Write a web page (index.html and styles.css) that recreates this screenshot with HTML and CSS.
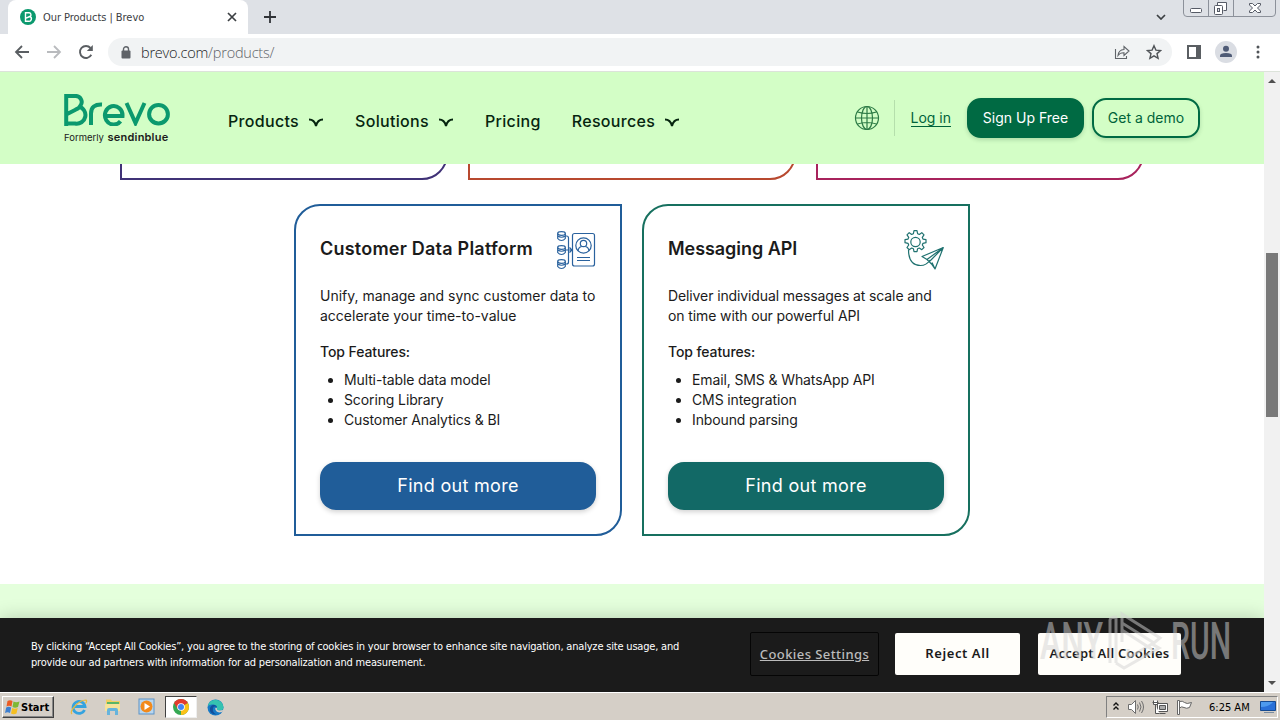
FILE: index.html
```html
<!DOCTYPE html>
<html lang="en">
  <head>
    <meta charset="UTF-8" />
    <meta name="viewport" content="width=device-width, initial-scale=1.0" />
    <title>Our Products | Brevo</title>
    <link rel="stylesheet" href="styles.css">
  </head>
  <body>
    <!-- Browser tabs -->
    <div class="tab-strip">
      <div class="tab">
        <svg class="favicon" width="16" height="16" viewBox="0 0 16 16">
          <circle cx="8" cy="8" r="8" fill="#0b996e" />
          <path d="M5.500 12.300V3.700H8.700a2 2 0 0 1 1.100 3.800a2.500 2.500 0 0 1-1.300 4.800zM5.500 9.300L9.800 7.500" fill="none" stroke="#fff" stroke-width="1.400" />
        </svg>
        <span class="tab-title">Our Products | Brevo</span>
        <svg width="10" height="10" viewBox="0 0 10 10"><path d="M1 1l8 8M9 1l-8 8" stroke="#3c4043" stroke-width="1.700" /></svg>
      </div>
      <svg class="new-tab" width="12" height="12" viewBox="0 0 12 12"><path d="M6 0v12M0 6h12" stroke="#303338" stroke-width="1.800" /></svg>
      <svg class="tab-search" width="10" height="6" viewBox="0 0 10 6"><path d="M1 1l4 4 4-4" fill="none" stroke="#3c4043" stroke-width="1.700" /></svg>
      <svg class="window-buttons" width="94" height="17" viewBox="0 0 94 17">
        <path d="M.5 0v13q0 3.500 3.500 3.500h85q3.500 0 3.500-3.500V0M25.500 0v16M50.500 0v16" fill="none" stroke="#8c919a" />
        <rect x="7.500" y="8.500" width="11" height="4" rx="1" fill="#fff" stroke="#565b66" />
        <path d="M34.500 5.500v-3h9v8h-3" fill="#fff" stroke="#565b66" />
        <rect x="31.500" y="5.500" width="8" height="9" rx="1" fill="#fff" stroke="#565b66" />
        <rect x="34.500" y="8.500" width="2" height="3" fill="#dee1e6" stroke="#565b66" />
        <path d="M66.500 3.500h3l2.500 2.500 2.500-2.500h3v1.500L74.500 8l3 3v1.500h-3L72 10l-2.500 2.500h-3V11l3-3-3-3z" fill="#fff" stroke="#565b66" />
      </svg>
    </div>

    <!-- Address bar -->
    <div class="toolbar">
      <svg width="16" height="16" viewBox="0 0 16 16"><path d="M15 8H2M8 2L2 8l6 6" fill="none" stroke="#5a5e62" stroke-width="1.800" /></svg>
      <svg width="16" height="16" viewBox="0 0 16 16"><path d="M1 8h13M8 2l6 6-6 6" fill="none" stroke="#b9bbbe" stroke-width="1.800" /></svg>
      <svg width="16" height="16" viewBox="0 0 16 16"><path d="M13.300 10.800A6 6 0 1 1 12.500 4" fill="none" stroke="#5a5e62" stroke-width="1.900" /><path d="M14.800 1v6h-6z" fill="#5a5e62" /></svg>
      <div class="address">
        <svg class="lock" width="10" height="13" viewBox="0 0 10 13"><rect x="0.500" y="4.500" width="9" height="8" rx="1" fill="#5f6368" /><path d="M2.500 5V3a2.500 2.200 0 0 1 5 0v2" fill="none" stroke="#5f6368" stroke-width="1.400" /></svg>
        <span class="url">brevo.com<span>/products/</span></span>
        <svg class="share" width="16" height="15" viewBox="0 0 16 15"><path d="M1.500 4v9.500h11V11M4 10.500q.5-5.500 6-6V1.500L15 6l-5 4.500V7.800Q6 7.600 4 10.500z" fill="none" stroke="#606469" stroke-width="1.100" /></svg>
        <svg width="16" height="16" viewBox="0 0 16 16"><path d="M8 1.700l1.900 4.400 4.700.4-3.600 3.100 1.100 4.700L8 11.800l-4.100 2.500L5 9.600 1.400 6.500l4.700-.4z" fill="none" stroke="#505458" stroke-width="1.400" /></svg>
      </div>
      <svg class="side-panel" width="14" height="14" viewBox="0 0 14 14"><rect x="1" y="1" width="12" height="12" fill="#fff" stroke="#5a5e62" stroke-width="2" /><path d="M9 1h5v12H9z" fill="#5a5e62" /></svg>
      <svg class="profile" width="22" height="22" viewBox="0 0 22 22"><circle cx="11" cy="11" r="11" fill="#dadde3" /><circle cx="11" cy="7.800" r="3" fill="#4f5b76" /><path d="M5 16v-1.500q0-2.500 6-2.500t6 2.500V16z" fill="#4f5b76" /></svg>
      <svg width="4" height="14" viewBox="0 0 4 14" fill="#505458"><circle cx="2" cy="2" r="1.500" /><circle cx="2" cy="7" r="1.500" /><circle cx="2" cy="12" r="1.500" /></svg>
    </div>

    <div class="viewport">
      <div class="page">
        <header>
          <a class="logo">
            <!-- Rounded stroke wordmark -->
            <svg width="106" height="32" viewBox="0 0 106 32" role="img" aria-label="Brevo">
              <g fill="none" stroke="#0b996e" stroke-width="4">
                <path d="M2.200 32V2H11a6 6 0 0 1 5.500 9.500q-1 2.500-5 4.200L2.200 20.500M14.500 12.500a8.500 8.500 0 0 1-3.500 17H2.200" />
                <path d="M27 31V19.500q0-9.500 11-9" />
                <path d="M41.500 22H58.500A8.800 9.300 0 1 0 56.500 27.200" />
                <path d="M62.500 9L71.500 29L80.500 9" />
                <ellipse cx="94.500" cy="20.200" rx="9.400" ry="9.300" />
              </g>
            </svg>
            <span class="formerly">Formerly <b>sendinblue</b></span>
          </a>
          <nav>
            <a>Products <svg width="16" height="10" viewBox="0 0 16 10"><path d="M1 1.500q5.500 0 7 6.500q1.500-6.500 7-6.500" /></svg></a>
            <a>Solutions <svg width="16" height="10" viewBox="0 0 16 10"><path d="M1 1.500q5.500 0 7 6.500q1.500-6.500 7-6.500" /></svg></a>
            <a>Pricing</a>
            <a>Resources <svg width="16" height="10" viewBox="0 0 16 10"><path d="M1 1.500q5.500 0 7 6.500q1.500-6.500 7-6.500" /></svg></a>
          </nav>
          <div class="account">
            <svg width="26" height="26" viewBox="0 0 26 26" fill="none" stroke="#2c7a45" stroke-width="1.200"><circle cx="13" cy="13" r="11.500" /><ellipse cx="13" cy="13" rx="5.500" ry="11.500" /><path d="M13 1.500v23M1.500 13h23M3.500 7q9.500 3 19 0M3.500 19q9.500-3 19 0" /></svg>
            <span class="divider"></span>
            <a class="login">Log in</a>
            <a class="btn btn-signup">Sign Up Free</a>
            <a class="btn btn-demo">Get a demo</a>
          </div>
        </header>

        <main>
          <div class="card-row card-row-top">
            <div class="card-end purple"></div>
            <div class="card-end orange"></div>
            <div class="card-end pink"></div>
          </div>
          <div class="card-row">
            <section class="card blue">
              <div class="card-head">
                <h2 class="title-cdp">Customer Data Platform</h2>
                <svg width="40" height="40" viewBox="0 0 40 40" fill="none" stroke="#2a629e" stroke-width="1.200">
                  <rect x="16.500" y="3.500" width="22" height="32.500" rx="2" />
                  <circle cx="27.500" cy="15.500" r="7.700" />
                  <circle cx="27.500" cy="13.500" r="3.200" />
                  <path d="M22 21q.5-4 3.700-4.500M33 21q-.5-4-3.700-4.500M21 27.500h13M21 30.500h13" />
                  <path d="M9 6h1.500q2 0 2 2v24q0 2-2 2H9M9 20h7M13.500 17.500L16 20l-2.500 2.500" />
                  <ellipse cx="5.500" cy="3.500" rx="3.800" ry="1.800" /><path d="M1.700 3.500v5q1.500 2 3.800 2t3.800-2v-5M1.700 6q3.800 2.500 7.600 0" />
                  <ellipse cx="5.500" cy="17.500" rx="3.800" ry="1.800" /><path d="M1.700 17.500v5q1.500 2 3.800 2t3.800-2v-5M1.700 20q3.800 2.500 7.600 0" />
                  <ellipse cx="5.500" cy="31.500" rx="3.800" ry="1.800" /><path d="M1.700 31.500v5q1.500 2 3.800 2t3.800-2v-5M1.700 34q3.800 2.500 7.600 0" />
                </svg>
              </div>
              <p>Unify, manage and sync customer data to<br />accelerate your time-to-value</p>
              <h3>Top Features:</h3>
              <ul>
                <li>Multi-table data model</li>
                <li>Scoring Library</li>
                <li>Customer Analytics &amp; BI</li>
              </ul>
              <a class="find-out">Find out more</a>
            </section>
            <section class="card teal">
              <div class="card-head">
                <h2 class="title-api">Messaging API</h2>
                <svg width="40" height="40" viewBox="0 0 40 40" fill="none" stroke="#207270" stroke-width="1.200" stroke-linejoin="round">
                  <circle cx="11.500" cy="12" r="4.700" />
                  <path d="M10 .700h3l.6 3 1.700.7 2.500-1.700 2.200 2.200-1.700 2.500.7 1.700 3 .6v3l-3 .6-.7 1.700 1.700 2.500-2.200 2.200-2.500-1.700-1.700.7-.6 3h-3l-.6-3-1.700-.7-2.500 1.700L3 17.500 4.700 15 4 13.300l-3-.6v-3l3-.6.7-1.700L3 4.900l2.200-2.200 2.500 1.700 1.700-.7z" />
                  <path d="M4.500 19.500q0 16 12 16q6 0 9.500-5.500M39.300 17.500L18 26.500l5 3zL31 39l-3-6.500M23 29.500l4.500 4.500L31 39M25.500 31.500L39.300 17.500" />
                </svg>
              </div>
              <p class="api-text">Deliver individual messages at scale and<br />on time with our powerful API</p>
              <h3>Top features:</h3>
              <ul>
                <li>Email, SMS &amp; WhatsApp API</li>
                <li>CMS integration</li>
                <li>Inbound parsing</li>
              </ul>
              <a class="find-out">Find out more</a>
            </section>
          </div>
        </main>

        <div class="next-section"></div>

        <div class="cookie-banner">
          <p>By clicking “Accept All Cookies”, you agree to the storing of cookies in your browser to enhance site navigation, analyze site usage, and<br />provide our ad partners with information for ad personalization and measurement.</p>
          <a class="cookie-settings">Cookies Settings</a>
          <a class="cookie-btn reject">Reject All</a>
          <a class="cookie-btn accept">Accept All Cookies</a>
        </div>
      </div>

      <div class="scrollbar">
        <svg width="8" height="4" viewBox="0 0 8 4"><path d="M0 4l4-4 4 4z" fill="#505050" /></svg>
        <div class="thumb"></div>
        <svg class="down" width="8" height="4" viewBox="0 0 8 4"><path d="M0 0l4 4 4-4z" fill="#505050" /></svg>
      </div>
    </div>

    <!-- Windows taskbar -->
    <footer class="taskbar">
      <div class="start">
        <svg width="17" height="16" viewBox="0 0 16 16">
          <path d="M3 2q2.500-1.500 5 0L7 7.500q-2.500-1.500-5 0z" fill="#ec5b22" />
          <path d="M9 2.500q2.500 1.500 6 0L13.500 8q-3 1.500-5.500 0z" fill="#7eb834" />
          <path d="M1.700 8.500q2.500-1.500 5 0L5.500 14q-2.500-1.500-5 0z" fill="#3d7fd0" />
          <path d="M7.700 9q2.500 1.500 5.500 0L12 14.500q-3 1.500-5.500 0z" fill="#f5bf21" />
        </svg>
        <b>Start</b>
      </div>
      <div class="task">
        <svg width="18" height="18" viewBox="0 0 18 18"><path d="M14.500 12A6 6 0 1 1 15 8.500H4" fill="none" stroke="#35a3df" stroke-width="2.800" /><path d="M2 16Q-.5 14 5 8T16 2q1.500 1-.5 3.500" fill="none" stroke="#e9b93a" stroke-width="1.200" /></svg>
      </div>
      <div class="task">
        <svg width="18" height="18" viewBox="0 0 18 18"><path d="M2 4V1.500h5L8 3h8v7H2z" fill="#f1cf62" /><path d="M3 4h12v2H3z" fill="#5bb567" /><path d="M1 6h15v7H1z" fill="#f7e39a" /><path d="M3 17v-5q0-2 2-2h7q2 0 2 2v5h-3v-4H6v4z" fill="#67b4dc" /></svg>
      </div>
      <div class="task">
        <svg width="18" height="18" viewBox="0 0 18 18"><rect x="1" y="1" width="15" height="15" fill="#b8d6ef" stroke="#5d94c8" /><circle cx="8.500" cy="8.500" r="6" fill="#f28a1c" /><path d="M6.500 5v7l5.500-3.500z" fill="#fff" /></svg>
      </div>
      <div class="task active">
        <svg width="16" height="16" viewBox="0 0 16 16"><circle cx="8" cy="8" r="8" fill="#35a853" /><path d="M8 8L1.100 4A8 8 0 0 1 14.900 4z" fill="#e33b2e" /><path d="M8 8L14.900 4A8 8 0 0 1 8 16z" fill="#fbc116" /><path d="M1.100 4L5 10.500 8 8 8 4z" fill="#e33b2e" /><circle cx="8" cy="8" r="3.800" fill="#fff" /><circle cx="8" cy="8" r="3" fill="#4285f4" /></svg>
      </div>
      <div class="task">
        <svg width="17" height="17" viewBox="0 0 17 17"><circle cx="8.500" cy="8.500" r="8" fill="#1779c6" /><path d="M.700 7A8 8 0 0 1 16.500 8q0 3.500-4 3.500-3 0-2.500-2Q10 6 6 5.500 3 5 .700 7z" fill="#35c2b0" /><path d="M6.500 8q-2.500 5 3 7.500Q2 15 3 9q1-3 4-3.200 3 .5 3 3-2-2-3.500-.8z" fill="#124f9c" /><path d="M10 9q-1.500 3.500 6.500 2 .5 1-1.500 2-5 1.500-6.500-2Q7.500 8 10 9z" fill="#d5cfc7" /></svg>
      </div>
      <div class="tray">
        <svg width="8" height="10" viewBox="0 0 8 10"><path d="M1.500 3.500L4 1l2.500 2.500M1.500 7.500L4 5l2.500 2.500" fill="none" stroke="#111" stroke-width="1.400" /></svg>
        <svg width="16" height="14" viewBox="0 0 16 14" fill="#fff" stroke="#6d6d6d"><path d="M.500 4.500h3l4-4v13l-4-4h-3z" /><path d="M9.500 4.500q1.500 2.500 0 5M11.500 2.500q3 4.500 0 9M13.500 1q4 6 0 12" fill="none" /></svg>
        <svg width="17" height="15" viewBox="0 0 17 15" fill="#fff" stroke="#555"><path d="M5.500 3.500h10v8h-10zM7.500 13.500h6" /><path d="M7.500 5.500h6v4h-6z" fill="#aaa" /><path d="M1.500.500v4h4v-4M.500 2.500h6M3.500 5v8.500h4" /></svg>
        <svg width="16" height="15" viewBox="0 0 16 15" fill="#fff" stroke="#666"><path d="M.500.500h2v14h-2zM2.500 1.500q3-1 5 1t7 0l-2 5q-3 1.500-5.500 0T2.500 8z" /></svg>
        <span class="clock">6:25 AM</span>
        <svg class="desktop" width="16" height="14" viewBox="0 0 16 14"><path d="M.500 1.500h15v9H.500z" fill="#2970d8" stroke="#154a91" /><path d="M1 7q8 0 12-5H1z" fill="#4d9aee" /><path d="M4 12.500h10" stroke="#7a8ca0" /></svg>
      </div>
    </footer>

    <svg class="watermark" width="200" height="66" viewBox="0 0 200 66" aria-hidden="true">
      <text x="4" y="50" textLength="63" lengthAdjust="spacingAndGlyphs">ANY</text>
      <text x="135" y="50" textLength="60" lengthAdjust="spacingAndGlyphs">RUN</text>
      <path d="M74 54V11q0-3 7-3M80 54V8M86 33V5l38 24-6 5-32-20M86 21l31 20M80 54l8 5 35-20-7-4-24 14v-9" />
    </svg>
  </body>
</html>
```
FILE: styles.css
```css
/* General Styling */
* {
  box-sizing: border-box;
}

body {
  margin: 0;
  width: 1280px;
  height: 720px;
  overflow: hidden;
  display: flex;
  flex-direction: column;
  position: relative;
  font-family: Inter, "Liberation Sans", sans-serif;
  font-size: 14px;
  color: #1b1b1b;
  background: #fff;
}

svg {
  display: block;
  flex: none;
}

h2,
h3,
p,
ul {
  margin: 0;
}

a,
span {
  white-space: nowrap;
}

/* Browser */
.tab-strip {
  height: 34px;
  flex: none;
  display: flex;
  align-items: center;
  background: #dee1e6;
}

.tab {
  width: 240px;
  height: 34px;
  margin-left: 8px;
  padding: 0 11px 0 12px;
  display: flex;
  align-items: center;
  background: #fff;
  border-radius: 8px 8px 0 0;
}

.tab-title {
  flex: 1;
  margin-left: 7px;
  font: 11px "DejaVu Sans Condensed", "DejaVu Sans", sans-serif;
  font-stretch: condensed;
  letter-spacing: -0.05px;
  color: #3c4043;
}

.new-tab {
  margin-left: 16px;
}

.tab-search {
  margin-left: auto;
}

.window-buttons {
  align-self: flex-start;
  margin: 0 3px 0 17px;
}

.toolbar {
  height: 38px;
  flex: none;
  display: flex;
  align-items: center;
  gap: 16px;
  padding: 0 20px 1px 14px;
  border-bottom: 1px solid #dce3da;
}

.address {
  flex: 1;
  height: 28px;
  margin-left: -2px;
  padding: 0 10px 0 13px;
  display: flex;
  align-items: center;
  background: #f1f3f4;
  border-radius: 14px;
}

.url {
  flex: 1;
  margin-left: 10px;
  font: 300 14.5px "Open Sans", "Noto Sans", sans-serif;
  letter-spacing: -0.22px;
  color: #202124;
}

.url span {
  color: #5f6368;
}

.share {
  margin-right: 16px;
}

.side-panel {
  margin-left: -1px;
}

.profile {
  margin-left: -2px;
  margin-right: 3px;
}

.viewport {
  height: 620px;
  flex: none;
  display: flex;
}

.page {
  width: 1264px;
  display: flex;
  flex-direction: column;
}

.scrollbar {
  width: 16px;
  display: flex;
  flex-direction: column;
  align-items: center;
  padding: 7px 0;
  background: #f1f1f1;
}

.thumb {
  width: 12px;
  height: 164px;
  margin-top: 170px;
  background: #797979;
}

.down {
  margin-top: auto;
}

/* Site header */
header {
  height: 92px;
  flex: none;
  display: flex;
  padding: 0 64px;
  background: #d3fec6;
}

.logo {
  width: 106px;
  padding-top: 22px;
}

.formerly {
  display: block;
  margin-top: 3px;
  font: 9.5px/16px Inter, sans-serif;
  color: #1b1b1b;
}

.formerly b {
  margin-left: 1px;
  font-size: 11px;
  font-weight: 600;
  letter-spacing: 0.2px;
}

nav {
  display: flex;
  gap: 31px;
  margin-left: 58px;
  padding-top: 38px;
  font-size: 16px;
  line-height: 22px;
  letter-spacing: 0.32px;
  color: #06250f;
}

nav a {
  display: flex;
  gap: 9px;
  font-weight: 500;
}

nav svg {
  margin-top: 8px;
  fill: none;
  stroke: #06250f;
  stroke-width: 2;
}

.account {
  height: 40px;
  margin: 26px 0 0 auto;
  display: flex;
  align-items: center;
  color: #00633a;
}

.divider {
  width: 1px;
  height: 36px;
  margin: 0 16px 0 14px;
  background: #b5dfac;
}

.login {
  border-bottom: 1px solid #00633a;
  line-height: 17px;
}

.btn {
  height: 40px;
  line-height: 36px;
  text-align: center;
  border: 2px solid #006a43;
  border-radius: 14px;
  box-shadow: 0 2px 4px rgba(0, 60, 30, 0.18);
}

.btn-signup {
  width: 117px;
  margin: 0 8px 0 16px;
  color: #fff;
  background: #006a43;
}

.btn-demo {
  width: 108px;
}

/* Product cards */
main {
  height: 420px;
  flex: none;
}

.card-row {
  display: flex;
  justify-content: center;
  gap: 20px;
}

.card-row-top {
  height: 16px;
  margin-bottom: 24px;
  align-items: flex-end;
  overflow: hidden;
}

.card-end {
  width: 328px;
  height: 60px;
  flex: none;
  border: 2px solid;
  border-radius: 0 0 26px 0;
}

.card {
  width: 328px;
  height: 332px;
  padding: 24px;
  display: flex;
  flex-direction: column;
  border: 2px solid;
  border-radius: 26px 0 26px 0;
}

.purple {
  border-color: #403277;
}

.orange {
  border-color: #b8492f;
}

.pink {
  border-color: #a8235c;
}

.blue {
  border-color: #205d99;
}

.teal {
  border-color: #17705f;
}

.card-head {
  height: 40px;
  display: flex;
  align-items: center;
  justify-content: space-between;
}

h2 {
  font-size: 18px;
  font-weight: 600;
  line-height: 24px;
  margin-bottom: 2px;
  white-space: nowrap;
}

.title-cdp {
  letter-spacing: 0.22px;
}

.title-api {
  letter-spacing: -0.05px;
}

.card p {
  margin-top: 16px;
  line-height: 20px;
  white-space: nowrap;
}

.card .api-text {
  letter-spacing: -0.11px;
}

h3 {
  margin-top: 16px;
  font-size: 14px;
  font-weight: 500;
  line-height: 20px;
  letter-spacing: -0.1px;
}

.card ul {
  margin-top: 8px;
  padding-left: 24px;
  line-height: 20px;
  letter-spacing: -0.12px;
}

.find-out {
  height: 48px;
  margin-top: auto;
  color: #fff;
  font-size: 18px;
  line-height: 48px;
  letter-spacing: 0.3px;
  text-align: center;
  border-radius: 16px;
  box-shadow: 0 2px 5px rgba(0, 0, 0, 0.18);
}

.blue .find-out {
  background: #205d99;
}

.teal .find-out {
  background: #126966;
}

.next-section {
  height: 34px;
  flex: none;
  background: #e4ffdc;
}

/* Cookie banner */
.cookie-banner {
  height: 74px;
  flex: none;
  display: flex;
  align-items: center;
  padding: 0 83px 2px 31px;
  color: #fff;
  background: #1b1b1b;
  box-shadow: 0 0 18px rgba(0, 0, 0, 0.2);
  clip-path: inset(-34px 0 0 0);
}

.cookie-banner p {
  width: 719px;
  margin-top: 2px;
  font: 11px/16px "DejaVu Sans Condensed", "DejaVu Sans", sans-serif;
  font-stretch: condensed;
  letter-spacing: -0.19px;
  white-space: nowrap;
}

.cookie-settings,
.cookie-btn {
  height: 44px;
  flex: none;
  font: 600 13px/42px "Noto Sans", sans-serif;
  letter-spacing: 0.25px;
  text-align: center;
  border-radius: 2px;
}

.cookie-settings {
  width: 129px;
  margin-right: 16px;
  font-weight: 500;
  letter-spacing: 0.42px;
  color: #bbb;
  text-decoration: underline;
  border: 1px solid #050505;
}

.cookie-btn {
  height: 42px;
  line-height: 41px;
  color: #1b1b1b;
  background: #fffefa;
}

.reject {
  width: 125px;
  margin-right: 18px;
  letter-spacing: 0.6px;
}

.accept {
  width: 143px;
}

/* Taskbar */
.taskbar {
  height: 28px;
  flex: none;
  display: flex;
  align-items: center;
  padding: 1px 2px 0;
  background: #d5cfc7;
  border-top: 1px solid #fff;
}

.start {
  width: 52px;
  height: 22px;
  margin-right: 9px;
  padding-left: 1px;
  display: flex;
  align-items: center;
  border: 1px solid;
  border-color: #fff #404040 #404040 #fff;
  box-shadow: inset -1px -1px #888;
}

.start b {
  font: bold 11px "DejaVu Sans Condensed", "DejaVu Sans", sans-serif;
  font-stretch: condensed;
  color: #000;
}

.task {
  width: 32px;
  height: 22px;
  margin-right: 2px;
  display: grid;
  place-items: center;
}

.task.active {
  background: #fff;
  border: 1px solid;
  border-color: #404040 #eee #eee #404040;
}

.tray {
  width: 172px;
  height: 22px;
  margin-left: auto;
  padding-left: 5px;
  display: flex;
  align-items: center;
  gap: 8px;
  border: 1px solid;
  border-color: #808080 #fff #fff #808080;
}

.clock {
  margin-left: 8px;
  font: 11px "DejaVu Sans Condensed", "DejaVu Sans", sans-serif;
  font-stretch: condensed;
  color: #000;
}

.desktop {
  margin-left: auto;
  margin-right: 1px;
}

.watermark {
  position: absolute;
  left: 1036px;
  top: 609px;
  overflow: visible;
  opacity: 0.5;
  font: 500 52px Roboto, sans-serif;
  fill: #d4d4d4;
}

.watermark path {
  fill: none;
  stroke: #d4d4d4;
  stroke-width: 3;
}
```
